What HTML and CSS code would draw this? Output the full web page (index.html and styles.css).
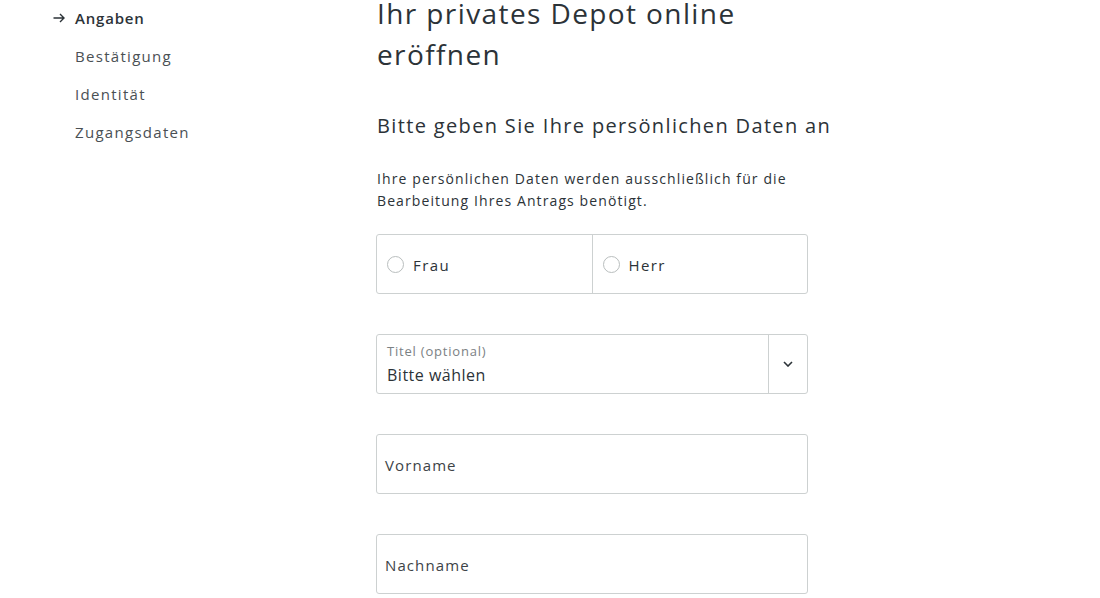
FILE: index.html
```html
<!DOCTYPE html>
<html lang="de">
<head>
<meta charset="utf-8">
<title>Depot eröffnen</title>
<link rel="stylesheet" href="styles.css">
</head>
<body>
<div class="page">
  <nav class="steps">
    <div class="step active">
      <svg class="arrow" width="12" height="10" viewBox="0 0 12 10"><path d="M0.5 5H11M7 1l4 4-4 4" fill="none" stroke="#2c3338" stroke-width="1.4"/></svg>
      <span>Angaben</span>
    </div>
    <div class="step"><span>Bestätigung</span></div>
    <div class="step"><span>Identität</span></div>
    <div class="step"><span>Zugangsdaten</span></div>
  </nav>
  <main class="content">
    <h1 class="title">Ihr privates Depot online eröffnen</h1>
    <h2 class="subtitle">Bitte geben Sie Ihre persönlichen Daten an</h2>
    <p class="intro">Ihre persönlichen Daten werden ausschließlich für die Bearbeitung Ihres Antrags benötigt.</p>
    <div class="field radios">
      <label class="radio"><span class="circle"></span>Frau</label>
      <label class="radio"><span class="circle"></span>Herr</label>
    </div>
    <div class="field select">
      <div class="select-text">
        <span class="label">Titel (optional)</span>
        <span class="value">Bitte wählen</span>
      </div>
      <div class="select-btn">
        <svg width="10" height="6" viewBox="0 0 10 6"><path d="M1 1l4 4 4-4" fill="none" stroke="#2c3338" stroke-width="1.6"/></svg>
      </div>
    </div>
    <div class="field input"><span class="placeholder">Vorname</span></div>
    <div class="field input"><span class="placeholder">Nachname</span></div>
  </main>
</div>
</body>
</html>
```
FILE: styles.css
```css
html, body {
  margin: 0;
  padding: 0;
  background: #ffffff;
}
body {
  font-family: "Open Sans", "Lato", sans-serif;
  color: #2c3338;
  overflow: hidden;
}
.page {
  display: flex;
  align-items: flex-start;
}
.steps {
  width: 323px;
  padding-left: 53px;
  margin-top: -1px;
  display: flex;
  flex-direction: column;
}
.step {
  display: flex;
  align-items: center;
  height: 38px;
  font-size: 15px;
  color: #4a5054;
  padding-left: 22px;
  letter-spacing: 1.3px;
}
.step.active {
  padding-left: 0;
  font-weight: 600;
  color: #2c3338;
  letter-spacing: 0.8px;
}
.arrow {
  margin-right: 10px;
}
.content {
  width: 432px;
  display: flex;
  flex-direction: column;
  margin-top: -7px;
}
.title {
  margin: 0;
  font-weight: 400;
  font-size: 28px;
  line-height: 41px;
  letter-spacing: 1.4px;
  width: 380px;
  padding-left: 1px;
}
.subtitle {
  margin: 36px 0 0 1px;
  font-weight: 400;
  font-size: 20px;
  line-height: 30px;
  letter-spacing: 1.35px;
  white-space: nowrap;
}
.intro {
  margin: 27px 0 0 1px;
  font-size: 14px;
  line-height: 22px;
  letter-spacing: 1.1px;
}
.field {
  box-sizing: border-box;
  height: 60px;
  border: 1px solid #cdd1d1;
  border-radius: 3px;
  margin-bottom: 40px;
}
.radios {
  margin-top: 22px;
  display: flex;
}
.radio {
  flex: 1;
  display: flex;
  align-items: center;
  padding-left: 10px;
  padding-top: 1px;
  font-size: 15px;
  letter-spacing: 1.4px;
}
.radio + .radio {
  border-left: 1px solid #cdd1d1;
}
.circle {
  box-sizing: border-box;
  width: 17px;
  height: 17px;
  border: 1px solid #b9bebe;
  border-radius: 50%;
  margin-right: 9px;
}
.select {
  display: flex;
}
.select-text {
  flex: 1;
  display: flex;
  flex-direction: column;
  padding: 7px 0 0 10px;
}
.label {
  font-size: 13px;
  line-height: 18px;
  color: #7b8184;
  letter-spacing: 0.8px;
}
.value {
  margin-top: 3px;
  font-size: 16px;
  line-height: 24px;
  letter-spacing: 0.5px;
}
.select-btn {
  width: 38px;
  border-left: 1px solid #cdd1d1;
  display: flex;
  align-items: center;
  justify-content: center;
}
.input {
  display: flex;
  align-items: center;
  padding-left: 8px;
  padding-top: 1px;
  font-size: 15px;
  letter-spacing: 1.1px;
  color: #3d4347;
}
```
